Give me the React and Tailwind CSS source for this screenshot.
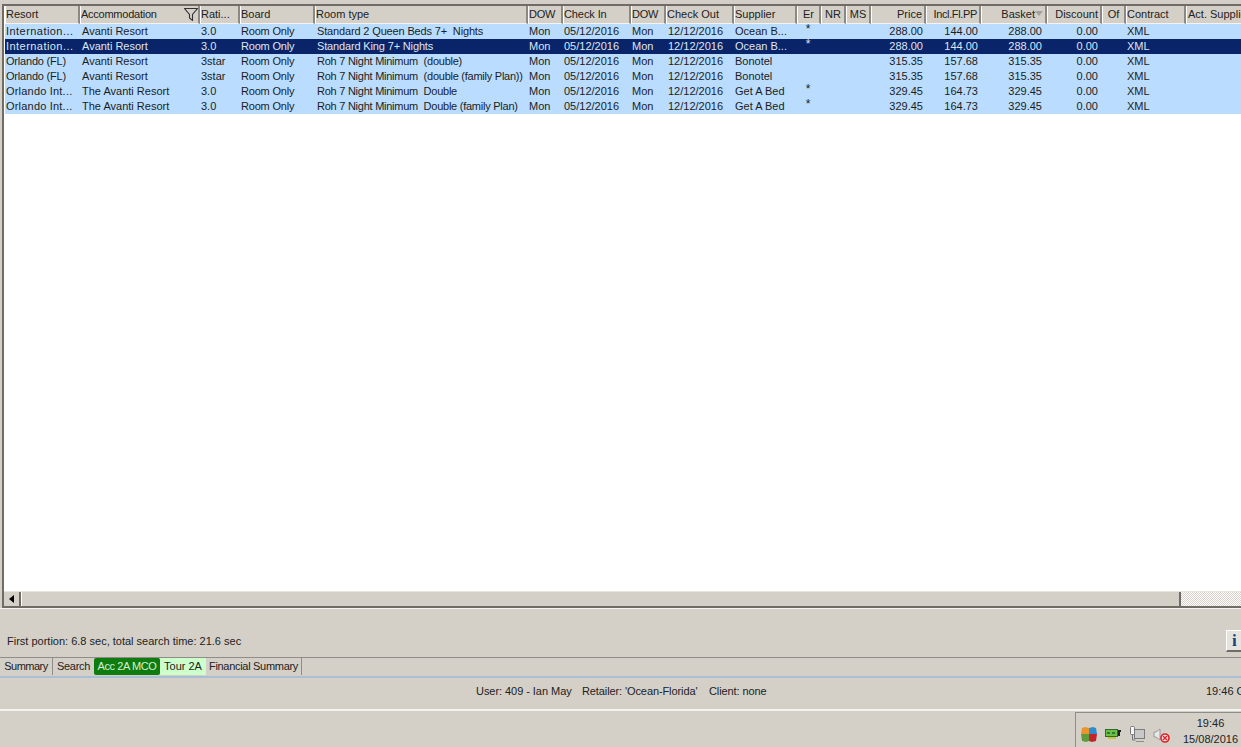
const cols = "grid-cols-[75px_120px_40px_75px_213px_35px_68px_35px_68px_63px_24px_25px_25px_55px_55px_66px_55px_24px_60px_60px]";
const F = { fontFamily: "'Liberation Sans', sans-serif" };
const heads = [
  ["Resort"],["Accommodation",0,"tracking-[-0.25px]"],["Rati..."],["Board"],["Room type"],["DOW",0,"tracking-[-0.2px]"],["Check In",0,"tracking-[-0.1px]"],["DOW",0,"tracking-[-0.2px]"],["Check Out"],["Supplier"],
  ["Er",1],["NR",1],["MS",1],["Price",2],["Incl.Fl.PP",2,"tracking-[-0.35px]"],["Basket",2],["Discount",2],["Of",1],["Contract"],["Act. Supplier",0,"pl-px"],
];
const rows = [
  ["Internation...","tracking-[0.45px]","Avanti Resort","3.0","Standard 2 Queen Beds 7+  Nights","tracking-[-0.15px]","Ocean B...","*","288.00","144.00"],
  ["Internation...","tracking-[0.45px]","Avanti Resort","3.0","Standard King 7+ Nights","tracking-[-0.15px]","Ocean B...","*","288.00","144.00"],
  ["Orlando (FL)","tracking-[-0.2px]","Avanti Resort","3star","Roh 7 Night Minimum  (double)","tracking-[-0.25px]","Bonotel","","315.35","157.68"],
  ["Orlando (FL)","tracking-[-0.2px]","Avanti Resort","3star","Roh 7 Night Minimum  (double (family Plan))","tracking-[-0.25px]","Bonotel","","315.35","157.68"],
  ["Orlando Int...","tracking-[0.2px]","The Avanti Resort","3.0","Roh 7 Night Minimum  Double","tracking-[-0.25px]","Get A Bed","*","329.45","164.73"],
  ["Orlando Int...","tracking-[0.2px]","The Avanti Resort","3.0","Roh 7 Night Minimum  Double (family Plan)","tracking-[-0.25px]","Get A Bed","*","329.45","164.73"],
];
function Cell({ children, className = "pl-px" }) {
  return <div className={"h-[15px] leading-[15px] whitespace-pre overflow-hidden " + className}>{children}</div>;
}
function Row({ r, selected }) {
  return (
    <div className={"grid w-max " + cols + " " + (selected ? "bg-[#0a246a] text-[#dfe6f2]" : "bg-[#b9dcff] text-[#1c1c1c]")}>
      <Cell className={"pl-px " + r[1]}>{r[0]}</Cell>
      <Cell className="pl-[2px]">{r[2]}</Cell>
      <Cell>{r[3]}</Cell>
      <Cell className="pl-px tracking-[-0.2px]">Room Only</Cell>
      <Cell className={"pl-[2px] " + r[5]}>{r[4]}</Cell>
      <Cell>Mon</Cell>
      <Cell>05/12/2016</Cell>
      <Cell>Mon</Cell>
      <Cell className="pl-[2px]">12/12/2016</Cell>
      <Cell>{r[6]}</Cell>
      <Cell className="text-center pr-[2px] text-[12px]"><span className="relative top-[-2px]">{r[7]}</span></Cell>
      <Cell />
      <Cell />
      <Cell className="text-right pr-[3px]">{r[8]}</Cell>
      <Cell className="text-right pr-[3px]">{r[9]}</Cell>
      <Cell className="text-right pr-[5px]">{r[8]}</Cell>
      <Cell className="text-right pr-[4px]">0.00</Cell>
      <Cell />
      <Cell>XML</Cell>
      <Cell />
    </div>
  );
}
export default function App() {
  return (
    <div className="w-[1241px] h-[747px] bg-[#d4d0c8] overflow-hidden flex flex-col text-[11px] text-[#222]" style={F}>
      <div className="pt-[4px] pl-[2px] h-[609px] shrink-0 border-b border-[#f4f3ef]">
        <div className="h-[604px] w-[1239px] border-t-2 border-l-2 border-b-2 border-[#6f6c66] bg-white flex flex-col overflow-hidden">
          <div className="pl-px">
            <div className={"grid w-max h-[18px] bg-[#d4d0c8] " + cols}>
              {heads.map(([h, a, c], i) => (
                <div key={i} className={"relative h-[18px] leading-[17px] border-l border-b border-white border-r-2 border-r-[#8b8982] border-b-[#f4f3ef] whitespace-nowrap overflow-hidden " + (a === 2 ? "text-right pr-[2px] " : a === 1 ? "text-center " : "") + (c || "")}>
                  {i === 15 ? <span className="pr-[8px]">{h}</span> : h}
                  {i === 1 && (
                    <svg className="absolute right-0 top-[2px]" width="14" height="13" viewBox="0 0 14 13" fill="none" stroke="#333" strokeWidth="1.1"><path d="M.5 .5h13L8.5 6.5v6L5.5 10V6.5z" /></svg>
                  )}
                  {i === 15 && (
                    <svg className="absolute right-[2px] top-[5px]" width="8" height="5" viewBox="0 0 8 5"><path d="M0 0h8L4 5z" fill="#a5a29a" /></svg>
                  )}
                </div>
              ))}
            </div>
          </div>
          <div className="pl-px">
            {rows.map((r, i) => <Row key={i} r={r} selected={i === 1} />)}
          </div>
          <div className="flex-1" />
          <div className="border-t border-[#e8e6e1] h-[14px] box-content flex bg-[#d4d0c8]">
            <div className="w-[17px] border-r-2 border-r-[#6f6c66] flex items-center justify-center">
              <svg width="5" height="8" viewBox="0 0 5 8"><path d="M5 0v8L0 4z" fill="#000" /></svg>
            </div>
            <div className="w-[1160px] border-r-2 border-r-[#6f6c66] border-l border-l-white" />
            <div className="flex-1 bg-[repeating-conic-gradient(#d4d0c8_0_25%,#ffffff_0_50%)] bg-[length:2px_2px]" />
          </div>
        </div>
      </div>
      <div className="h-[49px] shrink-0 border-b border-[#8f8d87] flex items-center relative">
        <div className="pl-[7px] pt-[17px]">First portion: 6.8 sec, total search time: 21.6 sec</div>
        <div className="absolute left-[1226px] top-[21px] w-[20px] h-[22px] bg-[#e4e3de] border-l border-t border-white border-b-2 border-b-[#6f6c66] border-r-2 border-r-[#6f6c66] text-[#16447c] font-bold text-[17px] leading-[20px] pl-[5px]" style={{ fontFamily: "'Liberation Serif', serif" }}>i</div>
      </div>
      <div className="h-[18px] shrink-0 flex">
        {[
          ["Summary","w-[53px] border-r border-[#8f8d87] tracking-[-0.5px]"],
          ["Search","w-[41px] tracking-[-0.3px]"],
          ["Acc 2A MCO","w-[66px] bg-[#0e7c0e] text-[#d6f0d6] rounded-[2px] tracking-[-0.4px]"],
          ["Tour 2A","w-[46px] bg-[#ccffcc]"],
          ["Financial Summary","w-[96px] border-r border-[#8f8d87] tracking-[-0.3px]"],
        ].map(([t, c], i) => (
          <div key={i} className={"h-[17px] leading-[17px] text-center whitespace-nowrap " + c}>{t}</div>
        ))}
      </div>
      <div className="h-[2px] shrink-0 bg-[#a9bfd6]" />
      <div className="h-[33px] shrink-0 relative border-b-2 border-b-[#f4f3ef]">
        <div className="flex pl-[476px] pt-[5px]">
          <span className="w-[106px] tracking-[-0.05px]">User: 409 - Ian May</span>
          <span className="w-[127px] tracking-[-0.1px]">Retailer: 'Ocean-Florida'</span>
          <span className="tracking-[-0.1px]">Client: none</span>
        </div>
        <div className="absolute left-[1206px] top-[5px] whitespace-nowrap">19:46 GMT</div>
      </div>
      <div className="flex-1 flex justify-end">
        <div className="w-[166px] mt-px border-l border-t border-[#8f8d87] flex items-center">
          <div className="flex items-start gap-[8px] pl-[5px] pt-[9px] w-[104px]">
            <svg width="16" height="16" viewBox="0 0 16 16"><path d="M1 2l3-1 4 1v6H0z" fill="#e8952c" /><path d="M8 2l4-1 3 1 1 6H8z" fill="#2f8ccc" /><path d="M0 8h8v7l-3 1-4-1z" fill="#5f9a3c" /><path d="M8 8h8l-1 7-4 1-3-1z" fill="#c4242c" /></svg>
            <svg className="mt-[3px]" width="16" height="10" viewBox="0 0 16 10"><rect x=".5" y=".5" width="12" height="7" fill="#6cc04a" stroke="#2e6a2e" /><path d="M3 8h8v2H3z" fill="#c8c83a" /><path d="M13 1h3v2h-1v4h-2z" fill="#222" /><path d="M2 3h3v2H2zM7 3h3v2H7z" fill="#2e7a2e" /></svg>
            <svg width="16" height="16" viewBox="0 0 16 16" fill="none"><rect x="5.5" y="3.5" width="10" height="9" fill="#c8c8c8" stroke="#7c7c7c" /><path d="M7 15.5h8" stroke="#8c8c8c" /><rect x="1.5" y=".5" width="4" height="8" rx="1" fill="#f6f6f6" stroke="#777" /><path d="M3.5 9v5h3" stroke="#777" /></svg>
            <svg className="mt-[2px]" width="17" height="15" viewBox="0 0 17 15" fill="none"><path d="M1 4h2l4-3v11l-4-3H1z" fill="#e8e8e8" stroke="#999" /><circle cx="12" cy="10" r="4" fill="#fbe0e0" stroke="#d8222a" strokeWidth="1.6" /><path d="M10 8l4 4M14 8l-4 4" stroke="#d8222a" strokeWidth="1.3" /></svg>
          </div>
          <div className="flex-1 text-center leading-[16px] pt-[2px] whitespace-nowrap">
            <div>19:46</div>
            <div>15/08/2016</div>
          </div>
        </div>
      </div>
    </div>
  );
}
